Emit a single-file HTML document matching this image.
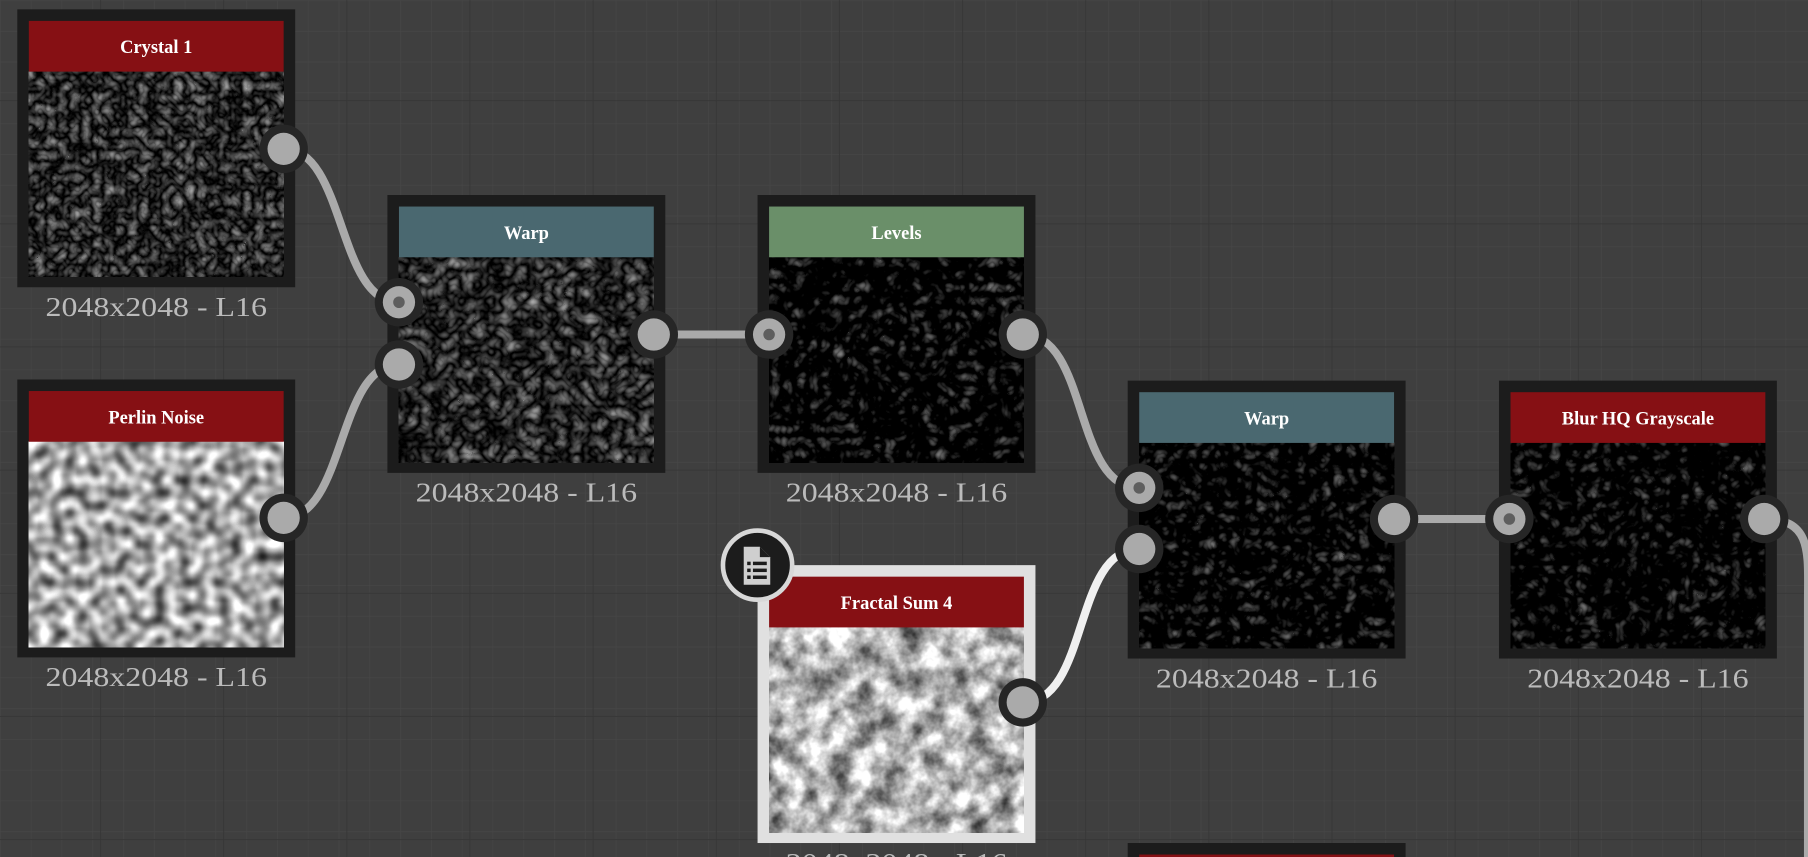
<!DOCTYPE html>
<html><head><meta charset="utf-8"><style>
html,body{margin:0;padding:0;background:#3f3f3f;overflow:hidden}
svg{display:block}
filter{color-interpolation-filters:sRGB}
</style></head><body>
<svg width="1808" height="857" viewBox="0 0 1568 743" xmlns="http://www.w3.org/2000/svg">
<defs>
<pattern id="minor" width="26.7" height="26.7" patternUnits="userSpaceOnUse">
<path d="M0 0H26.7M0 0V26.7" stroke="#474747" stroke-width="1" fill="none"/>
</pattern>
<pattern id="major" width="106.8" height="106.8" patternUnits="userSpaceOnUse" x="-20" y="-20">
<path d="M0 0H106.8M0 0V106.8" stroke="#363636" stroke-width="1.5" fill="none"/>
</pattern>
<filter id="fCrys" x="0" y="0" width="1" height="1" color-interpolation-filters="sRGB">
<feTurbulence type="turbulence" baseFrequency="0.1" numOctaves="2" seed="3"/>
<feColorMatrix type="matrix" values="0.85 0 0 0 -0.05  0.85 0 0 0 -0.05  0.85 0 0 0 -0.05  0 0 0 0 1"/>
</filter>
<filter id="fWarp" x="0" y="0" width="1" height="1" color-interpolation-filters="sRGB">
<feTurbulence type="turbulence" baseFrequency="0.085" numOctaves="2" seed="7"/>
<feColorMatrix type="matrix" values="0.85 0 0 0 -0.05  0.85 0 0 0 -0.05  0.85 0 0 0 -0.05  0 0 0 0 1"/>
</filter>
<filter id="fDark" x="0" y="0" width="1" height="1" color-interpolation-filters="sRGB">
<feTurbulence type="turbulence" baseFrequency="0.09" numOctaves="2" seed="11"/>
<feColorMatrix type="matrix" values="0.8 0 0 0 -0.22  0.8 0 0 0 -0.22  0.8 0 0 0 -0.22  0 0 0 0 1"/>
</filter>
<filter id="fPerl" x="0" y="0" width="1" height="1" color-interpolation-filters="sRGB">
<feTurbulence type="fractalNoise" baseFrequency="0.09" numOctaves="1" seed="5"/>
<feColorMatrix type="matrix" values="1.6 0 0 0 -0.15  1.6 0 0 0 -0.15  1.6 0 0 0 -0.15  0 0 0 0 1"/>
</filter>
<filter id="fFrac" x="0" y="0" width="1" height="1" color-interpolation-filters="sRGB">
<feTurbulence type="fractalNoise" baseFrequency="0.05" numOctaves="4" seed="9"/>
<feColorMatrix type="matrix" values="1.4 0 0 0 0  1.4 0 0 0 0  1.4 0 0 0 0  0 0 0 0 1"/>
</filter>
</defs>
<rect width="1568" height="743" fill="#3f3f3f"/>
<rect width="1568" height="743" fill="url(#minor)"/>
<rect width="1568" height="743" fill="url(#major)"/>

<g fill="none" stroke-width="7" stroke-linecap="round">
<path d="M246 129 C300 129 292 262 346 262" stroke="#aaa"/>
<path d="M246 449 C300 449 292 316 346 316" stroke="#aaa"/>
<path d="M567 290 L667 290" stroke="#aaa"/>
<path d="M887 290 C945 290 930 423 988 423" stroke="#aaa"/>
<path d="M887 609 C945 609 930 476 988 476" stroke="#f0f0f0"/>
<path d="M1209 450 L1309 450" stroke="#aaa"/>
<path d="M1530 450 C1572 450 1568 480 1568 520 L1568 743" stroke="#aaa"/>
</g>

<g font-family="Liberation Serif, serif">
<rect x="15" y="8" width="241" height="241" fill="#1c1c1c"/>
<rect x="25" y="62" width="221" height="178" filter="url(#fCrys)"/>
<rect x="25" y="18" width="221" height="44" fill="#861014"/>
<text x="135.5" y="46" fill="#fff" font-size="16" font-weight="bold" text-anchor="middle">Crystal 1</text>
<text x="135.5" y="274" fill="#bbb" font-size="24" text-anchor="middle" textLength="192" lengthAdjust="spacingAndGlyphs">2048x2048 - L16</text>

<rect x="15" y="329" width="241" height="241" fill="#1c1c1c"/>
<rect x="25" y="383" width="221" height="178" filter="url(#fPerl)"/>
<rect x="25" y="339" width="221" height="44" fill="#861014"/>
<text x="135.5" y="367" fill="#fff" font-size="16" font-weight="bold" text-anchor="middle">Perlin Noise</text>
<text x="135.5" y="595" fill="#bbb" font-size="24" text-anchor="middle" textLength="192" lengthAdjust="spacingAndGlyphs">2048x2048 - L16</text>

<rect x="336" y="169" width="241" height="241" fill="#1c1c1c"/>
<rect x="346" y="223" width="221" height="178" filter="url(#fWarp)"/>
<rect x="346" y="179" width="221" height="44" fill="#4a6870"/>
<text x="456.5" y="207" fill="#fff" font-size="16" font-weight="bold" text-anchor="middle">Warp</text>
<text x="456.5" y="435" fill="#bbb" font-size="24" text-anchor="middle" textLength="192" lengthAdjust="spacingAndGlyphs">2048x2048 - L16</text>

<rect x="657" y="169" width="241" height="241" fill="#1c1c1c"/>
<rect x="667" y="223" width="221" height="178" filter="url(#fDark)"/>
<rect x="667" y="179" width="221" height="44" fill="#6a8f69"/>
<text x="777.5" y="207" fill="#fff" font-size="16" font-weight="bold" text-anchor="middle">Levels</text>
<text x="777.5" y="435" fill="#bbb" font-size="24" text-anchor="middle" textLength="192" lengthAdjust="spacingAndGlyphs">2048x2048 - L16</text>

<rect x="978" y="330" width="241" height="241" fill="#1c1c1c"/>
<rect x="988" y="384" width="221" height="178" filter="url(#fDark)"/>
<rect x="988" y="340" width="221" height="44" fill="#4a6870"/>
<text x="1098.5" y="368" fill="#fff" font-size="16" font-weight="bold" text-anchor="middle">Warp</text>
<text x="1098.5" y="596" fill="#bbb" font-size="24" text-anchor="middle" textLength="192" lengthAdjust="spacingAndGlyphs">2048x2048 - L16</text>

<rect x="1300" y="330" width="241" height="241" fill="#1c1c1c"/>
<rect x="1310" y="384" width="221" height="178" filter="url(#fDark)"/>
<rect x="1310" y="340" width="221" height="44" fill="#861014"/>
<text x="1420.5" y="368" fill="#fff" font-size="16" font-weight="bold" text-anchor="middle">Blur HQ Grayscale</text>
<text x="1420.5" y="596" fill="#bbb" font-size="24" text-anchor="middle" textLength="192" lengthAdjust="spacingAndGlyphs">2048x2048 - L16</text>

<rect x="657" y="490" width="241" height="241" fill="#e0e0e0"/>
<rect x="667" y="544" width="221" height="178" filter="url(#fFrac)"/>
<rect x="667" y="500" width="221" height="44" fill="#861014"/>
<text x="777.5" y="528" fill="#fff" font-size="16" font-weight="bold" text-anchor="middle">Fractal Sum 4</text>
<text x="777.5" y="756" fill="#bbb" font-size="24" text-anchor="middle" textLength="192" lengthAdjust="spacingAndGlyphs">2048x2048 - L16</text>

<rect x="978" y="731" width="241" height="20" fill="#1c1c1c"/>
<rect x="988" y="741" width="221" height="10" fill="#861014"/>
</g>

<circle cx="657" cy="490" r="30" fill="#1c1c1c" stroke="#d8d8d8" stroke-width="4"/>
<path d="M645 474 H659 L668 483 V507 H645 Z" fill="#cfcfcf"/>
<path d="M659 474 V483 H668" fill="#1c1c1c"/>
<g fill="#1c1c1c">
<rect x="648" y="487" width="3" height="3"/><rect x="653" y="487" width="12" height="3"/>
<rect x="648" y="493" width="3" height="3"/><rect x="653" y="493" width="12" height="3"/>
<rect x="648" y="499" width="3" height="3"/><rect x="653" y="499" width="12" height="3"/>
</g>

<g>
<g fill="#262626">
<circle cx="246" cy="129" r="21"/><circle cx="246" cy="449" r="21"/>
<circle cx="346" cy="262" r="21"/><circle cx="346" cy="316" r="21"/><circle cx="567" cy="290" r="21"/>
<circle cx="667" cy="290" r="21"/><circle cx="887" cy="290" r="21"/>
<circle cx="988" cy="423" r="21"/><circle cx="988" cy="476" r="21"/><circle cx="1209" cy="450" r="21"/>
<circle cx="1309" cy="450" r="21"/><circle cx="1530" cy="450" r="21"/>
<circle cx="887" cy="609" r="21"/>
</g>
<g fill="#aaa">
<circle cx="246" cy="129" r="14"/><circle cx="246" cy="449" r="14"/>
<circle cx="346" cy="262" r="14"/><circle cx="346" cy="316" r="14"/><circle cx="567" cy="290" r="14"/>
<circle cx="667" cy="290" r="14"/><circle cx="887" cy="290" r="14"/>
<circle cx="988" cy="423" r="14"/><circle cx="988" cy="476" r="14"/><circle cx="1209" cy="450" r="14"/>
<circle cx="1309" cy="450" r="14"/><circle cx="1530" cy="450" r="14"/>
<circle cx="887" cy="609" r="14"/>
</g>
<g fill="#5e5e5e">
<circle cx="346" cy="262" r="5"/><circle cx="667" cy="290" r="5"/>
<circle cx="988" cy="423" r="5"/><circle cx="1309" cy="450" r="5"/>
</g>
</g>
</svg>
</body></html>
